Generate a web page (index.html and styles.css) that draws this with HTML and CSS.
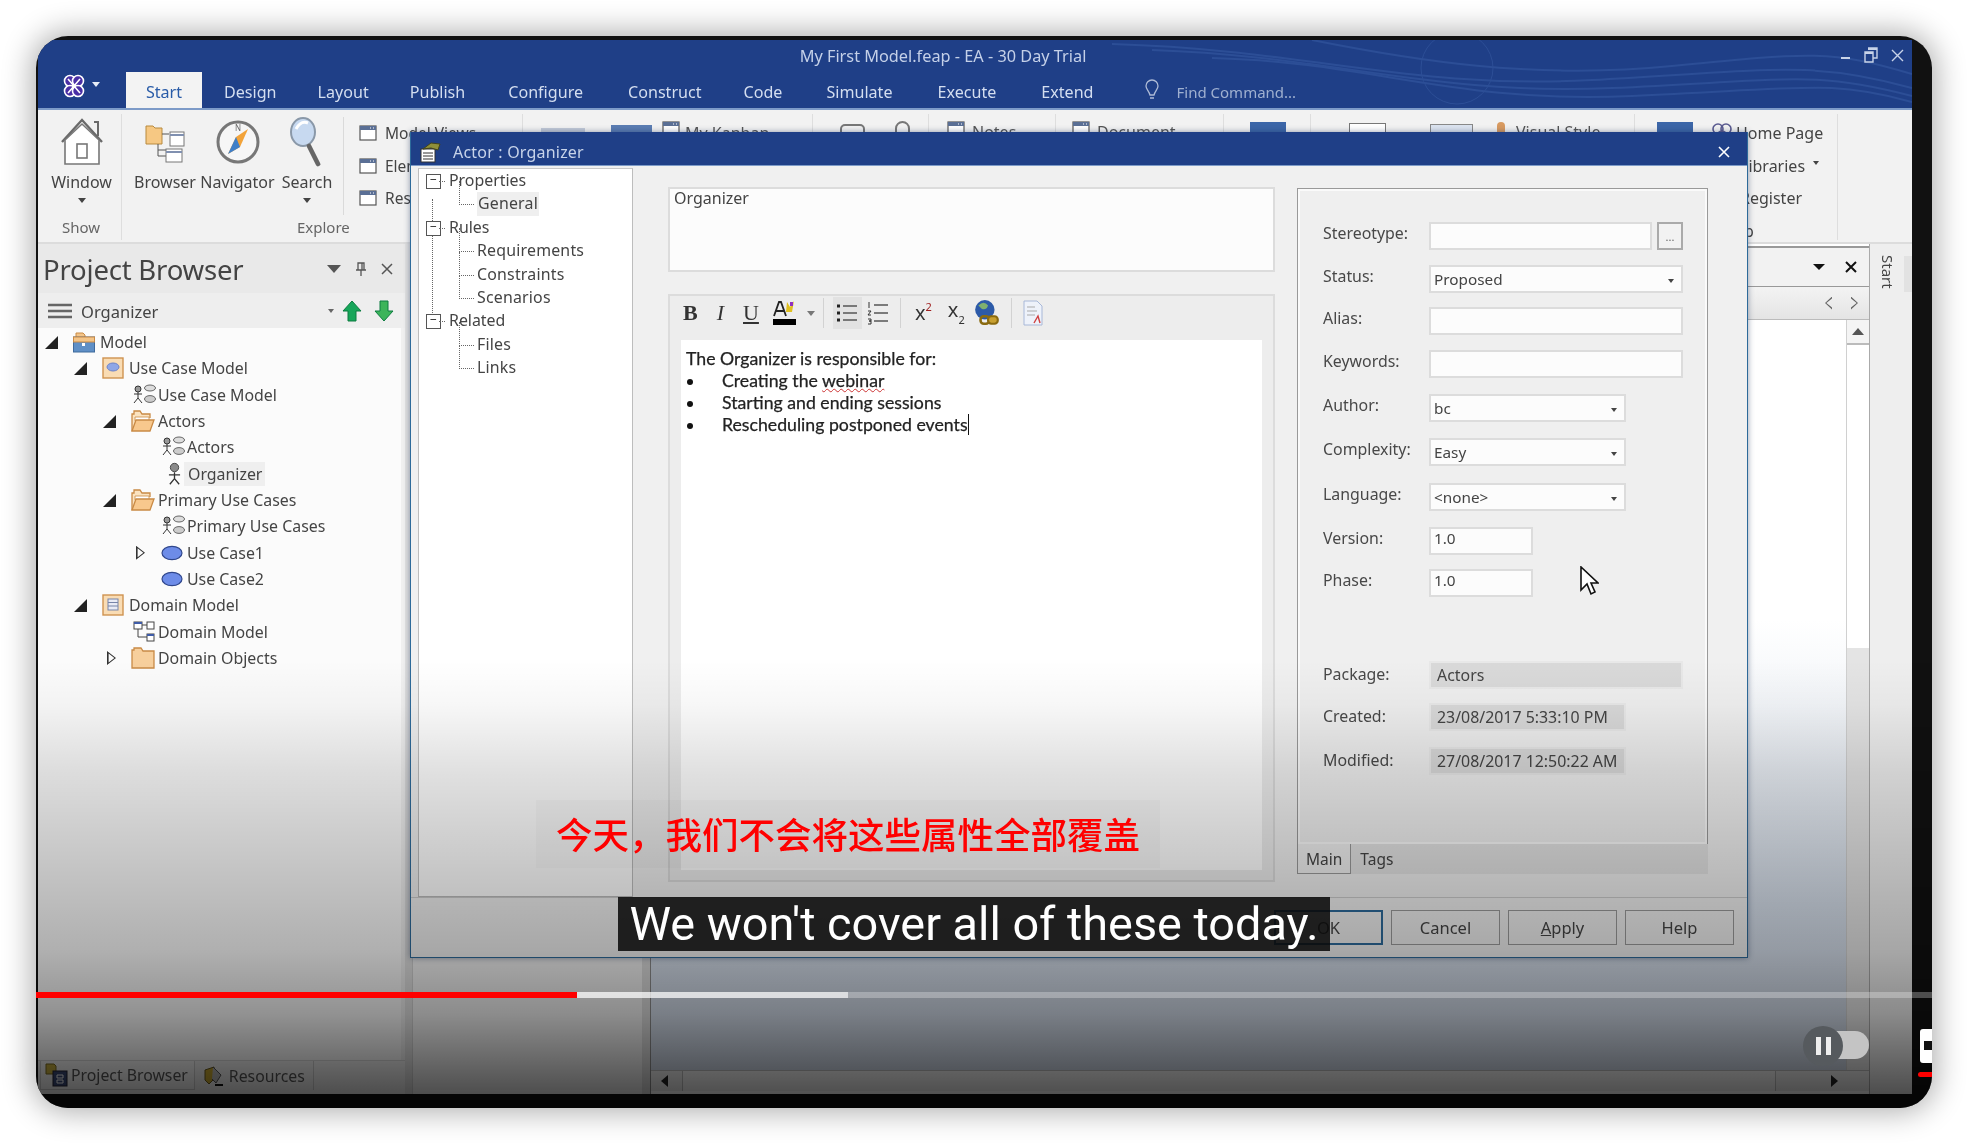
FILE: index.html
```html
<!DOCTYPE html>
<html lang="en">
<head>
<meta charset="utf-8">
<title>My First Model.feap - EA - 30 Day Trial</title>
<link rel="stylesheet" href="styles.css">
</head>
<body>
<svg class="defs" width="0" height="0" aria-hidden="true">
  <symbol id="i-pkg" viewBox="0 0 22 22"><path d="M3 6V2h7l2 2v2" fill="#f3c488" stroke="#c98a45"/><rect x=".5" y="6" width="21" height="15" fill="#5f8fc6" stroke="#3f6a9c"/><rect x=".5" y="6" width="21" height="5" fill="#f3c488" stroke="#c98a45"/><rect x="9" y="12" width="3" height="3" fill="#fff"/></symbol>
  <symbol id="i-uc" viewBox="0 0 22 22"><rect x="1" y="1" width="20" height="20" fill="#f9dcb4" stroke="#cf9350" stroke-width="1.4"/><ellipse cx="11" cy="10" rx="6" ry="4" fill="#8fa6e6" stroke="#6d82c8"/></symbol>
  <symbol id="i-dm" viewBox="0 0 22 22"><rect x="1" y="1" width="20" height="20" fill="#f9dcb4" stroke="#cf9350" stroke-width="1.4"/><rect x="6" y="5" width="10" height="11" fill="#e8eaf4" stroke="#7784a8"/><path d="M6 8.5h10M6 12h10" stroke="#7784a8"/></symbol>
  <symbol id="i-ucd" viewBox="0 0 24 22"><circle cx="5" cy="5" r="3" fill="#999" stroke="#333"/><path d="M5 8v6M1 10h8M5 14l-4 5M5 14l4 5" stroke="#333" fill="none"/><ellipse cx="17" cy="4" rx="5.500" ry="3" fill="#ddd" stroke="#666"/><ellipse cx="17" cy="15" rx="5.500" ry="3.400" fill="#ccc" stroke="#666"/></symbol>
  <symbol id="i-open" viewBox="0 0 24 22"><path d="M1 21V4h2V1h6l2 3h8v4" fill="#fbe3c0" stroke="#c98a45" stroke-width="1.3"/><path d="M4 7h14v4H4z" fill="#fff" stroke="#c98a45" stroke-width=".8"/><path d="M1 21l4-11h18l-4 11z" fill="#f8c88d" stroke="#c98a45" stroke-width="1.3"/></symbol>
  <symbol id="i-closed" viewBox="0 0 24 22"><path d="M1 21V3h2V1h7l2 3h11v17z" fill="#f7cf9c" stroke="#c98a45" stroke-width="1.3"/></symbol>
  <symbol id="i-actor" viewBox="0 0 14 24"><circle cx="7" cy="5" r="4.500" fill="#8a8a8a" stroke="#444"/><path d="M7 10v7M1 13h12M7 17l-5 6M7 17l5 6" stroke="#333" stroke-width="1.4" fill="none"/></symbol>
  <symbol id="i-ell" viewBox="0 0 22 16"><ellipse cx="11" cy="8" rx="10" ry="6.600" fill="#6d8ce8" stroke="#2f468c" stroke-width="1.2"/></symbol>
  <symbol id="i-cd" viewBox="0 0 22 22"><rect x="1" y="1" width="8" height="7" fill="#fff" stroke="#444"/><path d="M1 2h8" stroke="#3f5ca8" stroke-width="2"/><rect x="14" y="1" width="7" height="7" fill="#fff" stroke="#444"/><rect x="14" y="13" width="7" height="7" fill="#fff" stroke="#444"/><path d="M14 14h7" stroke="#3f5ca8" stroke-width="2"/><path d="M9 4h5M5 8v8h9" stroke="#444" fill="none"/></symbol>
  <symbol id="i-win" viewBox="0 0 18 18"><rect x="1" y="2" width="16" height="14" fill="#fff" stroke="#555" stroke-width="1.2"/><rect x="1" y="2" width="16" height="4" fill="#5a6f95"/><path d="M11 4h1M14 4h1" stroke="#fff"/></symbol>
</svg>

<div class="video">
  <div class="app">
    <header class="titlebar">
      <svg class="waves" viewBox="0 0 800 68" width="800" height="68" aria-hidden="true">
        <g fill="none" stroke="#2c4e96" stroke-width="2">
          <path d="M0 4C200 10 300 50 480 40S700 20 800 48"/>
          <path d="M40 10C220 16 320 56 500 48S700 30 800 56"/>
          <path d="M100 18C260 22 340 64 520 56S720 40 800 62"/>
          <path d="M200 0C300 20 420 40 560 26S720 10 800 34"/>
          <circle cx="345" cy="28" r="36" stroke-width="1"/>
        </g>
      </svg>
      <div class="titlerow">
        <span class="apptitle">My First Model.feap - EA - 30 Day Trial</span>
        <div class="winctl">
          <svg width="10" height="10" viewBox="0 0 10 10"><rect x="0" y="7" width="9" height="2" fill="#c8d3e8"/></svg>
          <svg width="14" height="16" viewBox="0 0 14 16"><path d="M4 1h9v10H9M1 5h8v10H1z" fill="none" stroke="#c8d3e8" stroke-width="1.4"/><path d="M4 2h9M1 6h8" stroke="#c8d3e8" stroke-width="2"/></svg>
          <svg width="13" height="13" viewBox="0 0 13 13"><path d="M1 1l11 11M12 1L1 12" stroke="#c8d3e8" stroke-width="1.4"/></svg>
        </div>
      </div>
      <nav class="tabrow">
        <div class="logo">
          <svg width="24" height="26" viewBox="0 0 24 26"><g fill="#4a2fa5" stroke="#fff" stroke-width="1.6"><circle cx="8" cy="8" r="5.500"/><circle cx="16" cy="8" r="5.500"/><circle cx="8" cy="18" r="5.500"/><circle cx="16" cy="18" r="5.500"/></g><path d="M6 6l12 14M18 6L6 20" stroke="#fff" stroke-width="1.6"/></svg>
          <i class="caret-w"></i>
        </div>
        <span class="tab active">Start</span>
        <span class="tab t-design">Design</span>
        <span class="tab t-layout">Layout</span>
        <span class="tab t-publish">Publish</span>
        <span class="tab t-configure">Configure</span>
        <span class="tab t-construct">Construct</span>
        <span class="tab t-code">Code</span>
        <span class="tab t-simulate">Simulate</span>
        <span class="tab t-execute">Execute</span>
        <span class="tab t-extend">Extend</span>
        <svg class="bulb" width="16" height="22" viewBox="0 0 16 22"><path d="M8 2a6 6 0 0 0-6 6c0 3 3 5 4 9h4c1-4 4-6 4-9a6 6 0 0 0-6-6zM6 20h4" fill="none" stroke="#aebbd6" stroke-width="1.3"/></svg>
        <span class="findcmd">Find Command...</span>
      </nav>
    </header>

    <section class="ribbon">
      <div class="rgroup g-show">
        <div class="rbig">
          <svg width="46" height="48" viewBox="0 0 46 48"><path d="M3 24L23 2l20 22" fill="#fff" stroke="#6a6a6a" stroke-width="2.4"/><path d="M35 4h4v14" fill="none" stroke="#6a6a6a" stroke-width="2"/><path d="M6 22v24h34V22L23 6z" fill="#fff" stroke="#777" stroke-width="1.6"/><rect x="18" y="26" width="10" height="14" fill="#fff" stroke="#777" stroke-width="1.6"/></svg>
          <span>Window</span><i class="caret-d"></i>
        </div>
        <span class="rlabel">Show</span>
      </div>
      <div class="rgroup g-explore">
        <div class="rrow">
          <div class="rbig r-browser">
            <svg width="42" height="44" viewBox="0 0 42 44"><path d="M2 6h7l2 2h7v16H2z" fill="#f6c883" stroke="#b88a3f"/><path d="M18 14h7M14 24v12h8M14 30h8" fill="none" stroke="#555"/><rect x="26" y="12" width="14" height="14" fill="#fff" stroke="#777"/><path d="M26 15h14" stroke="#8090b0" stroke-width="2"/><rect x="22" y="29" width="16" height="13" fill="#fff" stroke="#777"/><path d="M22 32h16" stroke="#8090b0" stroke-width="2"/></svg>
            <span>Browser</span>
          </div>
          <div class="rbig r-nav">
            <svg width="46" height="46" viewBox="0 0 46 46"><circle cx="23" cy="23" r="20" fill="#f6f6f6" stroke="#777" stroke-width="3"/><path d="M33 10L25 28 13 35l8-17z" fill="#f2a33a"/><path d="M13 35l8-17 4 10z" fill="#3f7fc8"/><text class="compass-n" x="23" y="12" text-anchor="middle">N</text></svg>
            <span>Navigator</span>
          </div>
          <div class="rbig r-search">
            <svg width="34" height="50" viewBox="0 0 34 50"><ellipse cx="13" cy="15" rx="12" ry="14" fill="#c7d9f0" stroke="#8a98a8" stroke-width="2"/><path d="M6 12q5-9 12-6" stroke="#fff" stroke-width="3" fill="none"/><path d="M19 29l9 18" stroke="#666" stroke-width="4.600" stroke-linecap="round"/></svg>
            <span>Search</span><i class="caret-d"></i>
          </div>
          <div class="rsmallcol">
            <div class="rsmall"><svg width="18" height="18"><use href="#i-win"/></svg><span>Model Views</span></div>
            <div class="rsmall"><svg width="18" height="18"><use href="#i-win"/></svg><span>Elements</span></div>
            <div class="rsmall"><svg width="18" height="18"><use href="#i-win"/></svg><span>Resources</span></div>
          </div>
        </div>
        <span class="rlabel">Explore</span>
      </div>
      <div class="rgroup g3"><i class="blk b1"></i><i class="blk b2"></i><svg class="w18" width="18" height="18"><use href="#i-win"/></svg><span class="rtxt">My Kanban</span></div>
      <div class="rgroup g4"><i class="blk b3"></i><i class="blk b4"></i></div>
      <div class="rgroup g5"><svg width="18" height="18"><use href="#i-win"/></svg><span class="rtxt">Notes</span></div>
      <div class="rgroup g6"><svg width="18" height="18"><use href="#i-win"/></svg><span class="rtxt">Document</span></div>
      <div class="rgroup g7"><i class="blk b2 b5"></i></div>
      <div class="rgroup g8"><i class="blk b6"></i><i class="blk b7"></i><i class="blk b8"></i><span class="rtxt">Visual Style</span></div>
      <div class="rgroup g9">
        <i class="blk b2 b9"></i>
        <div class="rlist">
          <div class="rli"><svg width="26" height="24" viewBox="0 0 26 24"><g fill="none" stroke="#5a5a90" stroke-width="1.6"><circle cx="9" cy="8" r="5"/><circle cx="17" cy="8" r="5"/><circle cx="13" cy="15" r="5"/></g></svg><span>Home Page</span></div>
          <div class="rli"><i class="rli-gap"></i><span>Libraries</span><i class="caret-d small"></i></div>
          <div class="rli"><i class="rli-gap"></i><span>Register</span></div>
          <div class="rli"><i class="rli-gap short"></i><span>Help</span></div>
        </div>
      </div>
    </section>

    <main class="workspace">
      <aside class="browser">
        <div class="pb-head">
          <span class="pb-title">Project Browser</span>
          <div class="pb-ctl">
            <i class="tri-d"></i>
            <svg width="10" height="14" viewBox="0 0 10 14"><path d="M2 1h6v7H2zM0 8h10M5 8v6M6 1v7" fill="none" stroke="#555" stroke-width="1.3"/></svg>
            <svg width="12" height="12" viewBox="0 0 12 12"><path d="M1 1l10 10M11 1L1 11" stroke="#555" stroke-width="1.5"/></svg>
          </div>
        </div>
        <div class="pb-tools">
          <svg width="24" height="16" viewBox="0 0 24 16"><path d="M0 2h24M0 8h24M0 14h24" stroke="#666" stroke-width="2.4"/></svg>
          <span class="pb-crumb">Organizer</span>
          <i class="caret-d small"></i>
          <svg class="ga1" width="20" height="22" viewBox="0 0 20 22"><path d="M10 1L1 11h5v10h8V11h5z" fill="#17a65a" stroke="#0c7d40"/></svg>
          <svg class="ga2" width="20" height="22" viewBox="0 0 20 22"><path d="M10 21L1 11h5V1h8v10h5z" fill="#3cb45a" stroke="#0c7d40"/></svg>
        </div>
        <ul class="tree">
          <li class="row l0"><i class="arr"></i><svg class="ic" width="22" height="22"><use href="#i-pkg"/></svg><span>Model</span></li>
          <li class="row l1"><i class="arr"></i><svg class="ic" width="22" height="22"><use href="#i-uc"/></svg><span>Use Case Model</span></li>
          <li class="row l2 diag"><i class="noarr"></i><svg class="ic" width="24" height="22"><use href="#i-ucd"/></svg><span>Use Case Model</span></li>
          <li class="row l2 fold"><i class="arr"></i><svg class="ic" width="24" height="22"><use href="#i-open"/></svg><span>Actors</span></li>
          <li class="row l3 diag"><i class="noarr"></i><svg class="ic" width="24" height="22"><use href="#i-ucd"/></svg><span>Actors</span></li>
          <li class="row l3 act"><i class="noarr"></i><svg class="ic" width="14" height="24"><use href="#i-actor"/></svg><span class="sel">Organizer</span></li>
          <li class="row l2 fold"><i class="arr"></i><svg class="ic" width="24" height="22"><use href="#i-open"/></svg><span>Primary Use Cases</span></li>
          <li class="row l3 diag"><i class="noarr"></i><svg class="ic" width="24" height="22"><use href="#i-ucd"/></svg><span>Primary Use Cases</span></li>
          <li class="row l3 uc"><i class="arr-o"></i><svg class="ic" width="22" height="16"><use href="#i-ell"/></svg><span>Use Case1</span></li>
          <li class="row l3 uc"><i class="noarr"></i><svg class="ic" width="22" height="16"><use href="#i-ell"/></svg><span>Use Case2</span></li>
          <li class="row l1"><i class="arr"></i><svg class="ic" width="22" height="22"><use href="#i-dm"/></svg><span>Domain Model</span></li>
          <li class="row l2 diag cdg"><i class="noarr"></i><svg class="ic" width="22" height="22"><use href="#i-cd"/></svg><span>Domain Model</span></li>
          <li class="row l2 fold"><i class="arr-o"></i><svg class="ic" width="24" height="22"><use href="#i-closed"/></svg><span>Domain Objects</span></li>
        </ul>
        <div class="pb-tabs">
          <div class="pb-tab on"><svg width="24" height="24" viewBox="0 0 24 24"><path d="M1 1h8l2 2v8H1z" fill="#c8b040" stroke="#7a6a20"/><rect x="8" y="8" width="14" height="15" fill="#3a4a78" stroke="#223"/><path d="M12 12h6v3h-6zM12 17h6v3h-6z" fill="none" stroke="#fff"/></svg><span>Project Browser</span></div>
          <div class="pb-tab"><svg width="24" height="24" viewBox="0 0 24 24"><path d="M2 6l9-3v12l-5 5-4-4z" fill="#c8a830" stroke="#6a5a20"/><path d="M10 3l8 8-5 8-4-4" fill="#bbb" stroke="#555"/><path d="M12 21h8" stroke="#111" stroke-width="2"/></svg><span>Resources</span></div>
        </div>
      </aside>
      <div class="splitter"></div>
      <div class="dock"></div>
      <div class="splitter thin"></div>
      <section class="mainview">
        <div class="mv-top">
          <div class="mv-head"><i class="tri-d dark"></i><svg width="12" height="12" viewBox="0 0 12 12"><path d="M1 1l10 10M11 1L1 11" stroke="#111" stroke-width="2"/></svg></div>
          <div class="mv-sub"><i class="tri-l"></i><i class="tri-r"></i></div>
          <div class="mv-body">
            <div class="mv-canvas"></div>
            <div class="mv-scroll"><div class="sb-btn"><i class="tri-u"></i></div><div class="sb-track"></div><div class="sb-rest"></div></div>
          </div>
          <div class="mv-hscroll"><i class="hs-l"></i><div class="hs-bar"></div><i class="hs-r"></i></div>
        </div>
        <div class="vtabs"><span class="vtab">Start</span></div>
      </section>
    </main>

    <div class="dialog" role="dialog">
      <div class="dlg-title">
        <svg width="22" height="22" viewBox="0 0 22 22"><rect x="1" y="8" width="14" height="13" fill="#fff" stroke="#333"/><path d="M3 12h10M3 15h10M3 18h10" stroke="#333"/><path d="M3 8l8-6 9 1-2 6-7-2z" fill="#8f8f3a" stroke="#44441a"/></svg>
        <span class="dlg-name">Actor : Organizer</span>
        <svg class="dlg-x" width="12" height="12" viewBox="0 0 12 12"><path d="M1 1l10 10M11 1L1 11" stroke="#fff" stroke-width="1.6"/></svg>
      </div>
      <div class="dlg-body">
        <div class="dtree">
          <div class="dt-root">Properties</div>
          <div class="dt-child"><span class="dt-sel">General</span></div>
          <div class="dt-root">Rules</div>
          <div class="dt-child">Requirements</div>
          <div class="dt-child">Constraints</div>
          <div class="dt-child">Scenarios</div>
          <div class="dt-root">Related</div>
          <div class="dt-child">Files</div>
          <div class="dt-child">Links</div>
        </div>
        <div class="center">
          <div class="namebox">Organizer</div>
          <div class="notes">
            <div class="toolbar">
              <span class="tb tb-b">B</span>
              <span class="tb tb-i">I</span>
              <span class="tb tb-u">U</span>
              <svg class="tb-a" width="23" height="26" viewBox="0 0 23 26"><path d="M1 16L6 2h2l5 14M3 11h8" fill="none" stroke="#222" stroke-width="1.8"/><path d="M14 2l3 5 4-6-2 11h-6z" fill="#e0c020"/><path d="M17 2h3v4h-3z" fill="#9030c0"/><rect x="0" y="19" width="23" height="6" fill="#000"/></svg>
              <i class="caret-d tb-c"></i>
              <i class="tb-sep s1"></i>
              <span class="tb-on"><svg width="22" height="22" viewBox="0 0 22 22"><path d="M7 4h14M7 11h14M7 18h14" stroke="#555" stroke-width="1.4"/><path d="M1 2.500h3v3H1zM1 9.500h3v3H1zM1 16.500h3v3H1z" fill="#222"/></svg></span>
              <svg class="tb-num" width="22" height="26" viewBox="0 0 22 26"><path d="M7 5h14M7 13h14M7 21h14" stroke="#555" stroke-width="1.4"/><path d="M2 2v6M1 11h3l-3 4h3M1 19h3v2H2h2v3H1" fill="none" stroke="#333"/></svg>
              <i class="tb-sep s2"></i>
              <span class="tb tb-x">x<sup>2</sup></span>
              <span class="tb tb-xs">x<sub>2</sub></span>
              <svg class="tb-g" width="26" height="28" viewBox="0 0 24 26"><circle cx="10" cy="10" r="9" fill="#2c5aa8"/><path d="M4 6q5-5 9 0-2 5-6 3z" fill="#7fb070"/><rect x="6" y="16" width="8" height="7" rx="3" fill="none" stroke="#8a6a10" stroke-width="2.4"/><rect x="13" y="16" width="9" height="7" rx="3" fill="#c8a030" stroke="#8a6a10" stroke-width="2"/></svg>
              <i class="tb-sep s3"></i>
              <svg class="tb-d" width="20" height="26" viewBox="0 0 20 26"><path d="M1 1h13l5 5v19H1z" fill="#eef2fa" stroke="#a8b8d8"/><path d="M4 7h8M4 11h10M4 15h8" stroke="#aaa"/><path d="M11 23l4-7 2 7" stroke="#d04040" fill="none" stroke-width="1.4"/></svg>
            </div>
            <div class="editor">
              <p>The Organizer is responsible for:</p>
              <ul>
                <li>Creating the <span class="spell">webinar</span></li>
                <li>Starting and ending sessions</li>
                <li><span class="caretline">Rescheduling postponed events</span></li>
              </ul>
            </div>
          </div>
        </div>
        <div class="props">
          <form class="panel">
            <label>Stereotype:</label><div class="f-row"><div class="fld f-stereo"></div><div class="dots">...</div></div>
            <label>Status:</label><div class="fld sel-f f-full">Proposed<i class="caret-d small"></i></div>
            <label>Alias:</label><div class="fld f-full"></div>
            <label>Keywords:</label><div class="fld f-full"></div>
            <label>Author:</label><div class="fld sel-f f-mid">bc<i class="caret-d small"></i></div>
            <label>Complexity:</label><div class="fld sel-f f-mid">Easy<i class="caret-d small"></i></div>
            <label>Language:</label><div class="fld sel-f f-mid">&lt;none&gt;<i class="caret-d small"></i></div>
            <label>Version:</label><div class="fld f-short">1.0</div>
            <label>Phase:</label><div class="fld f-short">1.0</div>
            <label class="low">Package:</label><div class="fld ro f-full">Actors</div>
            <label class="low">Created:</label><div class="fld ro f-mid">23/08/2017 5:33:10 PM</div>
            <label class="low">Modified:</label><div class="fld ro f-mid">27/08/2017 12:50:22 AM</div>
          </form>
          <div class="ptabs"><span class="ptab on">Main</span><span class="ptab">Tags</span></div>
        </div>
      </div>
      <div class="dlg-foot">
        <button class="btn ok" type="button">OK</button>
        <button class="btn" type="button">Cancel</button>
        <button class="btn" type="button"><u>A</u>pply</button>
        <button class="btn" type="button">Help</button>
      </div>
      <svg class="cursor" width="20" height="30" viewBox="0 0 20 30"><path d="M2 1v23l6-6 4 10 4-2-4-9h7z" fill="#fff" stroke="#111" stroke-width="1.6"/></svg>
    </div>

    <div class="shade"></div>
    <div class="cc-zh-bg"></div>
    <div class="cc-zh">今天&#xFF0C;我们不会将这些属性全部覆盖</div>
    <div class="cc-en">We won't cover all of these today.</div>
    <div class="progress"><i class="played"></i><i class="loaded"></i></div>
    <div class="pausewrap">
      <i class="pill"></i>
      <span class="pausebtn"><i></i><i></i></span>
    </div>
  </div>
  <div class="edgebox"><i></i></div>
  <i class="edgered"></i>
</div>
</body>
</html>
```
FILE: styles.css
```css
* { box-sizing: border-box; }
html, body { margin: 0; height: 100%; background: #fff; overflow: hidden; }
body { padding: 36px; font-family: "Noto Sans", "Open Sans", sans-serif; color: #444; font-size: 14.5px; }
.defs { position: absolute; }
i { display: block; font-style: normal; }

.video { position: relative; width: 1896px; height: 1072px; border-radius: 32px; background: #111; overflow: hidden; padding: 4px 20px 14px 2px; }
body::before { content: ""; position: fixed; left: 36px; top: 36px; width: 1896px; height: 1072px; border-radius: 32px; box-shadow: 0 0 30px 4px rgba(0,0,0,.32); }

.app { position: relative; width: 1874px; height: 1054px; display: flex; flex-direction: column; background: #f0f0f0; filter: blur(.45px); }

/* title bar */
.titlebar { position: relative; height: 70px; background: #1f3f87; border-bottom: 2px solid #7d9bc8; flex: none; overflow: hidden; }
.waves { position: absolute; right: 0; top: 0; }
.titlerow { position: relative; height: 32px; display: flex; align-items: center; justify-content: center; }
.apptitle { color: #c4d0e8; font-size: 16.300px; position: relative; left: -32px; }
.winctl { position: absolute; right: 8px; top: 7px; display: flex; gap: 13px; align-items: center; }
.tabrow { position: relative; display: flex; height: 36px; align-items: stretch; }
.logo { width: 88px; display: flex; align-items: flex-start; padding: 1px 0 0 24px; gap: 6px; }
.caret-w { width: 0; height: 0; border: 4px solid transparent; border-top: 5px solid #e6ecf6; margin-top: 9px; }
.tab { color: #d4def0; font-size: 16.100px; line-height: 34px; padding-top: 3px; }
.tab.active { background: #f3f3f3; color: #2a5ca8; width: 76px; text-align: center; }
.t-design { margin-left: 22px; }
.t-layout { margin-left: 41px; }
.t-publish { margin-left: 41px; }
.t-configure { margin-left: 43px; }
.t-construct { margin-left: 45px; }
.t-code { margin-left: 42px; }
.t-simulate { margin-left: 44px; }
.t-execute { margin-left: 45px; }
.t-extend { margin-left: 45px; }
.bulb { margin: 6px 0 0 50px; }
.findcmd { color: #9fb0d0; font-size: 15px; line-height: 34px; padding-top: 3px; margin-left: 17px; }

/* ribbon */
.ribbon { height: 134px; flex: none; display: flex; background: #f2f2f2; border-bottom: 2px solid #dcdcdc; overflow: hidden; }
.rgroup { flex: none; position: relative; border-right: 1px solid #dedede; margin: 4px 0 2px; display: flex; }
.g-show { width: 84px; flex-direction: column; align-items: center; padding-left: 4px; }
.rlabel { position: absolute; bottom: 2px; color: #666; font-size: 15px; line-height: 22px; }
.g-show .rlabel { left: 24px; }
.rbig { display: flex; flex-direction: column; align-items: center; color: #444; font-size: 16px; line-height: 20px; white-space: nowrap; }
.rbig svg { height: 50px; margin-bottom: 5px; margin-top: 3px; }
.compass-n { font-size: 8px; fill: #666; }
.g-explore { width: 401px; }
.g-explore .rlabel { left: 175px; }
.rrow { display: flex; padding-left: 11px; }
.r-browser { width: 64px; }
.r-nav { width: 77px; margin-left: 2px; }
.r-search { width: 56px; margin-left: 3px; }
.rsmallcol { margin: 3px 0 0 8px; padding-left: 15px; border-left: 1px solid #dadada; height: 98px; }
.rsmall { display: flex; gap: 8px; height: 32.500px; align-items: center; font-size: 15.500px; }
.caret-d { width: 0; height: 0; border: 4px solid transparent; border-top: 5px solid #444; margin-top: 6px; }
.caret-d.small { border-width: 3.500px; border-top-width: 4.500px; }
.g3 { width: 290px; }
.g4 { width: 116px; }
.g5 { width: 127px; padding: 6px 0 0 18px; gap: 7px; }
.g6 { width: 168px; padding: 6px 0 0 16px; gap: 7px; }
.g7 { width: 87px; }
.g8 { width: 324px; }
.g9 { width: 203px; }
.rtxt { font-size: 16px; line-height: 24px; color: #555; white-space: nowrap; }
.g3 .rtxt { margin: 7px 0 0 5px; }
.w18 { margin: 6px 0 0 10px; }
.blk { height: 50px; flex: none; }
.b1 { width: 44px; margin: 14px 0 0 18px; background: #c3cad8; }
.b2 { width: 41px; margin: 11px 0 0 26px; background: #5b7db3; }
.b3 { width: 25px; height: 18px; margin: 10px 0 0 27px; border: 2px solid #777; border-radius: 5px; }
.b4 { width: 15px; height: 24px; margin: 7px 0 0 30px; border: 2px solid #777; border-radius: 8px; }
.b5 { width: 36px; margin: 8px 0 0 26px; background: #3c66a8; }
.b6 { width: 37px; height: 30px; margin: 9px 0 0 38px; border: 1px solid #777; background: #fff; }
.b7 { width: 43px; height: 30px; margin: 10px 0 0 44px; border: 1px solid #888; background: #dce4f0; }
.b8 { width: 8px; height: 16px; margin: 8px 6px 0 24px; background: #d89a60; border-radius: 4px; }
.b9 { width: 36px; height: 40px; margin: 8px 0 0 22px; background: #3c66a8; }
.g8 .rtxt { margin: 6px 0 0 5px; }
.rlist { margin: 3px 0 0 16px; }
.rli { display: flex; height: 32.500px; align-items: center; font-size: 16px; color: #444; white-space: nowrap; gap: 1px; }
.rli .caret-d { margin: -2px 0 0 7px; }
.rli-gap { width: 30px; }
.rli-gap.short { width: 9px; }

/* workspace */
.workspace { flex: 1; min-height: 0; display: flex; }
.browser { width: 367px; flex: none; display: flex; flex-direction: column; background: #fff; position: relative; }
.pb-head { height: 49px; background: #e9e9e9; display: flex; align-items: center; padding: 1px 0 0 5px; flex: none; }
.pb-title { font-size: 27.500px; color: #444; letter-spacing: -.2px; flex: 1; }
.pb-ctl { display: flex; align-items: center; gap: 15px; padding-right: 12px; }
.tri-d { width: 0; height: 0; border: 7px solid transparent; border-top: 8px solid #555; border-bottom: 0; }
.pb-tools { height: 35px; background: #eeeeee; display: flex; align-items: center; padding: 1px 0 0 10px; flex: none; }
.pb-crumb { margin-left: 9px; flex: 1; font-size: 16.500px; }
.pb-tools .caret-d { margin: 2px 0 0 0; border-top-color: #666; }
.ga1 { margin: 0 0 0 8px; }
.ga2 { margin: 0 11px 0 12px; }
.tree { list-style: none; margin: 0; padding: 1px 0 0; flex: 1; background: #fbfbfb; border-right: 4px solid #f0f0f0; }
.row { height: 26.330px; display: flex; align-items: center; font-size: 15.900px; white-space: nowrap; }
.l0 { padding-left: 7px; }
.l1 { padding-left: 36px; }
.l2 { padding-left: 65px; }
.l3 { padding-left: 94px; }
.arr, .noarr, .arr-o { width: 28px; flex: none; }
.arr { height: 13px; position: relative; }
.arr::before { content: ""; position: absolute; left: 0; top: 0; border-style: solid; border-width: 0 0 13px 13px; border-color: transparent transparent #222 transparent; }
.arr-o { height: 14px; position: relative; }
.arr-o::before { content: ""; position: absolute; left: 4px; top: 0; width: 9px; height: 14px; background: #333; clip-path: polygon(0 0, 100% 50%, 0 100%, 0 0, 18% 18%, 18% 82%, 82% 50%, 18% 18%); }
.ic { margin-right: 5px; flex: none; }
.fold .ic { margin-right: 3px; }
.diag .ic { margin-left: 2px; margin-right: 1px; }
.cdg .ic { margin-right: 3px; }
.act .ic { margin: 0 3px 0 8px; width: 13px; }
.uc .ic { margin: 0 4px 0 1px; }
.sel { background: #efefef; padding: 2px 3px 2px 4px; line-height: 20px; }
.pb-tabs { height: 34px; background: #f0f0f0; display: flex; padding: 0 0 4px 2px; border-top: 1px solid #d8d8d8; flex: none; }
.pb-tab { display: flex; align-items: center; gap: 2px; padding: 0 8px; font-size: 15.800px; border-right: 1px solid #ccc; color: #555; }
.pb-tab.on { border-bottom: 1px solid #ccc; border-left: 1px solid #ccc; background: #f4f4f4; padding: 0 6px 0 4px; }
.splitter { width: 8px; flex: none; background: #e0e0e0; border-right: 1px solid #d0d0d0; }
.splitter.thin { width: 9px; background: #dadada; border-right: 1px solid #8a8a8a; }
.dock { width: 229px; flex: none; background: #f1f1f1; }
.mainview { flex: 1; display: flex; min-width: 0; }
.mv-top { flex: 1; display: flex; flex-direction: column; min-width: 0; background: #fff; border-right: 1px solid #aaa; }
.mv-head { height: 41px; margin-top: 2px; border-top: 2px solid #999; border-bottom: 1px solid #999; background: #f2f2f2; display: flex; align-items: center; justify-content: flex-end; gap: 20px; padding-right: 12px; flex: none; }
.tri-d.dark { border-width: 6px 6px 0; border-top: 6px solid #111; border-left: 6px solid transparent; border-right: 6px solid transparent; }
.mv-sub { height: 33px; background: linear-gradient(#f3f3f3, #e4e4e4); border-bottom: 1px solid #bbb; display: flex; align-items: center; justify-content: flex-end; gap: 19px; padding-right: 11px; flex: none; }
.tri-l, .tri-r { width: 7px; height: 13px; background: #666; }
.tri-l { clip-path: polygon(100% 0, 0 50%, 100% 100%, 100% 85%, 20% 50%, 100% 15%); }
.tri-r { clip-path: polygon(0 0, 100% 50%, 0 100%, 0 85%, 80% 50%, 0 15%); }
.mv-body { flex: 1; display: flex; min-height: 0; }
.mv-canvas { flex: 1; background: linear-gradient(#fff 40%, #d7e0ec 78%, #cdd6e4); }
.mv-scroll { width: 23px; display: flex; flex-direction: column; background: #e8e8e8; border-left: 1px solid #d0d0d0; }
.sb-btn { height: 25px; background: #f4f4f4; border-bottom: 2px solid #bbb; display: flex; align-items: center; justify-content: center; }
.tri-u { width: 0; height: 0; border: 6px solid transparent; border-bottom: 7px solid #555; border-top: 0; }
.sb-track { height: 303px; background: #fff; }
.sb-rest { flex: 1; background: #e4e4e4; }
.mv-hscroll { height: 21px; display: flex; align-items: center; background: #ececec; border-top: 1px solid #bbb; margin-bottom: 3px; flex: none; }
.hs-l { width: 0; height: 0; border: 6px solid transparent; border-right: 7px solid #222; margin-left: 4px; }
.hs-bar { flex: 1; height: 100%; margin: 0 55px 0 14px; background: #f2f2f2; border: 1px solid #bbb; border-width: 0 1px; }
.hs-r { width: 0; height: 0; border: 6px solid transparent; border-left: 7px solid #222; margin-right: 25px; }
.vtabs { width: 42px; flex: none; background: #eee; padding: 11px 0 0 0; position: relative; }
.vtab { writing-mode: vertical-rl; font-size: 15px; color: #444; margin-left: 8px; display: block; }
.vtabs::after { content: ""; position: absolute; right: 0; top: 12px; width: 8px; height: 36px; background: #e2e2e2; }

/* dialog (floating window) */
.dialog { position: absolute; left: 372px; top: 92px; width: 1338px; height: 826px; background: #f0f0f0; border: 1px solid #2d6a9a; border-top: 0; box-shadow: 0 0 6px rgba(20,40,80,.45); display: flex; flex-direction: column; }
.dlg-title { height: 34px; background: #1f3f87; border-bottom: 1px solid #7d9bc8; display: flex; align-items: center; padding: 6px 17px 0 9px; flex: none; }
.dlg-name { color: #c8d4ea; font-size: 16px; margin-left: 11px; flex: 1; letter-spacing: .2px; }
.dlg-body { flex: 1; display: flex; padding: 2px 0 0 7px; min-height: 0; }
.dtree { width: 215px; flex: none; background: #fff; border: 1px solid #bdbdbd; border-top-color: #c8c8c8; position: relative; }
.dtree::before { content: ""; position: absolute; left: 13px; top: 30px; height: 124px; border-left: 1px dotted #666; }
.dt-root, .dt-child { height: 23.400px; line-height: 23.400px; position: relative; font-size: 15.900px; white-space: nowrap; }
.dt-root { padding-left: 30px; }
.dt-child { padding-left: 58px; letter-spacing: .2px; }
.dt-root::before { content: "\2212"; position: absolute; left: 7px; top: 5px; width: 13px; height: 13px; border: 1px solid #555; background: #fff; line-height: 10px; font-size: 12px; text-align: center; color: #222; }
.dt-root::after { content: ""; position: absolute; left: 20px; top: 12px; width: 6px; border-top: 1px dotted #666; }
.dt-child::before { content: ""; position: absolute; left: 40px; top: -11px; width: 14px; height: 23px; border-left: 1px dotted #666; border-bottom: 1px dotted #666; }
.dt-sel { background: #efefef; display: inline-block; padding: 0 1px; }
.center { width: 607px; flex: none; margin-left: 35px; padding-top: 19px; }
.namebox { height: 85px; background: #fcfcfc; border: 2px solid #dcdcdc; padding: 0 4px; line-height: 18px; font-size: 16px; }
.notes { height: 588px; margin-top: 22px; border: 2px solid #dcdcdc; background: #ededed; padding-bottom: 10px; display: flex; flex-direction: column; }
.toolbar { height: 44px; display: flex; align-items: center; flex: none; padding-bottom: 11px; }
.tb { font-family: "Liberation Serif", serif; font-size: 22px; color: #333; line-height: 1; }
.tb-b { font-weight: 700; margin-left: 13px; }
.tb-i { font-style: italic; margin-left: 19px; }
.tb-u { text-decoration: underline; margin-left: 19px; }
.tb-a { margin-left: 14px; }
.tb-c { margin: 6px 0 0 11px; border-top-color: #777; }
.tb-sep { width: 1px; height: 30px; background: #d2d2d2; }
.s1 { margin-left: 8px; }
.tb-on { background: #e2e2e2; width: 29px; height: 32px; display: flex; align-items: center; justify-content: center; margin-left: 9px; }
.tb-num { margin-left: 5px; }
.s2 { margin-left: 11px; }
.tb-x { font-family: "Noto Sans", sans-serif; font-size: 20px; margin-left: 14px; }
.tb-x sup { font-size: 11px; color: #a02020; vertical-align: 9px; line-height: 0; }
.tb-xs { font-family: "Noto Sans", sans-serif; font-size: 20px; margin-left: 16px; position: relative; top: -3px; }
.tb-xs sub { font-size: 11px; vertical-align: -7px; line-height: 0; }
.tb-g { margin-left: 9px; }
.s3 { margin-left: 11px; }
.tb-d { margin-left: 11px; }
.editor { flex: 1; margin: 0 11px; background: #fff; padding: 8px 5px; font-family: Lato, "Open Sans", sans-serif; font-size: 17.700px; color: #222; line-height: 22px; -webkit-text-stroke: .25px #222; }
.editor p { margin: 0; }
.editor ul { margin: 0; padding: 0; list-style: none; }
.editor li { padding-left: 36px; position: relative; }
.editor li::before { content: ""; position: absolute; left: 1px; top: 9px; width: 6px; height: 6px; border-radius: 50%; background: #111; }
.spell { text-decoration: underline wavy #c33 1px; }
.caretline { border-right: 1.500px solid #111; }
.props { width: 411px; flex: none; margin-left: 22px; padding-top: 20px; }
.panel { height: 657px; border: 1px solid #999; box-shadow: inset 0 0 0 2px #fafafa; padding: 33px 0 0 25px; display: grid; grid-template-columns: 106px 1fr; grid-template-rows: 43px 42px 43px 44px 44px 45px 44px 42px 92px 42px 44px 29px; background: #efefef; }
.panel label { font-size: 15.900px; line-height: 22px; color: #484848; white-space: nowrap; }
.panel .low { padding-top: 2px; }
.fld { height: 28px; background: #fcfcfc; border: 2px solid #dcdcdc; font-size: 15.300px; line-height: 24px; padding: 0 3px; position: relative; color: #444; white-space: nowrap; }
.f-row { display: flex; gap: 5px; }
.f-stereo { width: 223px; }
.dots { width: 26px; height: 28px; border: 2px solid #aaa; background: #f2f2f2; line-height: 26px; text-align: center; font-size: 11px; color: #666; }
.f-full { width: 254px; }
.f-mid { width: 197px; }
.f-short { width: 104px; line-height: 18px; }
.sel-f .caret-d { position: absolute; right: 7px; top: 6px; border-top-color: #444; }
.ro { background: #d9d9d9; padding-left: 6px; border-color: #e8e8e8; font-size: 15.900px; }
.ptabs { display: flex; height: 30px; background: #e3e3e3; margin-top: -1px; position: relative; }
.ptab { font-size: 15.500px; line-height: 30px; padding: 0 16px 0 9px; color: #444; }
.ptab.on { background: #f0f0f0; border: 1px solid #999; border-top: 0; padding: 0 8px; height: 30px; }
.dlg-foot { height: 60px; flex: none; border-top: 1px solid #ccc; display: flex; justify-content: flex-end; gap: 8px; padding: 12px 13px 0 0; }
.btn { width: 109px; height: 35px; border: 1px solid #9a9a9a; background: #f0f0f0; font: inherit; font-size: 16.500px; color: #444; padding: 0; }
.btn.ok { border: 2px solid #2d6a9a; }
.cursor { position: absolute; left: 1168px; top: 434px; }

/* video player overlay */
.shade { position: absolute; left: -2px; right: -20px; top: 620px; bottom: -14px; pointer-events: none; background: linear-gradient(rgba(0,0,0,0), rgba(0,0,0,.03) 10%, rgba(0,0,0,.12) 25%, rgba(0,0,0,.3) 65%, rgba(0,0,0,.42) 79%, rgba(0,0,0,.68) 97%); }
.cc-zh-bg { position: absolute; left: 498px; top: 760px; width: 624px; height: 68px; background: rgba(0,0,0,.02); }
.cc-zh { position: absolute; left: 518px; top: 770px; font-family: "Noto Sans CJK SC", sans-serif; font-weight: 500; font-size: 36.500px; line-height: 48px; color: #f00; white-space: nowrap; }
.cc-en { position: absolute; left: 580px; top: 857px; width: 712px; height: 54px; background: rgba(10,10,10,.88); color: #fff; font-family: Roboto, sans-serif; font-size: 46.800px; line-height: 54px; text-align: center; white-space: nowrap; }
.progress { position: absolute; left: -2px; right: -20px; top: 952px; height: 6px; background: rgba(255,255,255,.28); display: flex; }
.played { width: 541px; background: #f00; }
.loaded { width: 271px; background: rgba(255,255,255,.62); }
.pausewrap { position: absolute; left: 1765px; top: 986px; width: 66px; height: 40px; }
.pill { position: absolute; left: 20px; top: 5px; width: 46px; height: 28px; border-radius: 14px; background: #c4c4c4; }
.pausebtn { position: absolute; left: 0; top: 0; width: 40px; height: 40px; border-radius: 50%; background: #565a5e; display: flex; align-items: center; justify-content: center; gap: 5px; }
.pausebtn i { width: 5px; height: 18px; background: #eee; }
.edgebox { position: absolute; right: 0; top: 993px; width: 12px; height: 34px; background: #fff; border-radius: 3px 0 0 3px; padding-top: 12px; }
.edgebox i { height: 9px; background: #111; margin-left: 4px; }
.edgered { position: absolute; right: 0; top: 1036px; width: 14px; height: 5px; background: #f00; border-radius: 3px 0 0 3px; }
```
